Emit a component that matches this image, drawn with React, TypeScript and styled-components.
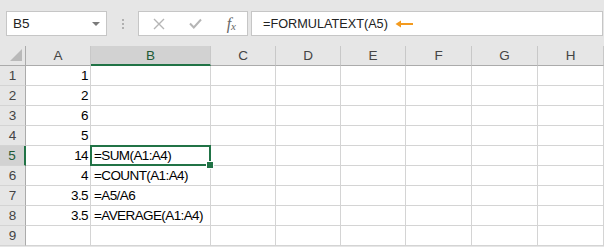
import React from "react";
import styled, { createGlobalStyle, css } from "styled-components";

const GlobalStyle = createGlobalStyle`
  html, body {
    margin: 0;
    padding: 0;
    background: #e6e6e6;
  }
`;

const columns = ["A", "B", "C", "D", "E", "F", "G", "H"];
const widths = [65, 120, 65, 65, 65, 66, 66, 66];

const rows: [string, string][] = [
  ["1", ""],
  ["2", ""],
  ["6", ""],
  ["5", ""],
  ["14", "=SUM(A1:A4)"],
  ["4", "=COUNT(A1:A4)"],
  ["3.5", "=A5/A6"],
  ["3.5", "=AVERAGE(A1:A4)"],
  ["", ""],
];

const SELECTED_ROW = 5;
const SELECTED_COL = "B";

const App = () => {
  return (
    <>
      <GlobalStyle />
      <Page>
        <FormulaRow>
          <NameBox>
            <span>B5</span>
            <Caret />
          </NameBox>
          <Grip>
            <i />
            <i />
            <i />
          </Grip>
          <FxButtons>
            <svg width="12" height="12" viewBox="0 0 12 12">
              <path d="M1 1 L11 11 M11 1 L1 11" stroke="#b5b5b5" strokeWidth="1.4" fill="none" />
            </svg>
            <svg width="13" height="11" viewBox="0 0 13 11">
              <path d="M1 5.5 L4.8 9.5 L12 1.5" stroke="#b5b5b5" strokeWidth="2" fill="none" />
            </svg>
            <Fx>
              f<sub>x</sub>
            </Fx>
          </FxButtons>
          <FormulaInput>
            <span>=FORMULATEXT(A5)</span>
            <svg width="19" height="8" viewBox="0 0 19 8">
              <path d="M2 4 H18" stroke="#f39a1e" strokeWidth="2" />
              <path d="M0.5 4 L6 0.5 L6 7.5 Z" fill="#f39a1e" />
            </svg>
          </FormulaInput>
        </FormulaRow>

        <Sheet $widths={widths}>
          <Corner>
            <svg width="12" height="12" viewBox="0 0 12 12">
              <path d="M12 0 L12 12 L0 12 Z" fill="#b9b9b9" />
            </svg>
          </Corner>
          {columns.map((c) => (
            <ColHead key={c} $active={c === SELECTED_COL}>
              {c}
            </ColHead>
          ))}
          {rows.map(([a, b], i) => {
            const n = i + 1;
            return (
              <React.Fragment key={n}>
                <RowHead $active={n === SELECTED_ROW}>{n}</RowHead>
                <Cell $align="right">{a}</Cell>
                <Cell $selected={n === SELECTED_ROW}>{b}</Cell>
                {columns.slice(2).map((c) => (
                  <Cell key={c} />
                ))}
              </React.Fragment>
            );
          })}
        </Sheet>
      </Page>
    </>
  );
};

const Page = styled.div`
  width: 604px;
  height: 247px;
  overflow: hidden;
  background: #e6e6e6;
  display: flex;
  flex-direction: column;
  font-family: "Liberation Sans", Arial, sans-serif;
`;

const FormulaRow = styled.div`
  display: flex;
  align-items: stretch;
  height: 25px;
  margin: 11px 1px 10px 6px;
`;

const Box = css`
  box-sizing: border-box;
  background: #ffffff;
  border: 1px solid #c6c6c6;
  display: flex;
  align-items: center;
`;

const NameBox = styled.div`
  ${Box};
  width: 101px;
  padding: 0 6px 0 6px;
  justify-content: space-between;
  font-size: 13.5px;
  color: #222;
`;

const Caret = styled.span`
  width: 0;
  height: 0;
  border-left: 4px solid transparent;
  border-right: 4px solid transparent;
  border-top: 4px solid #7a7a7a;
  margin-top: 1px;
`;

const Grip = styled.div`
  width: 31px;
  display: flex;
  flex-direction: column;
  align-items: center;
  justify-content: center;
  gap: 2px;

  i {
    width: 2px;
    height: 2px;
    background: #b0b0b0;
  }
`;

const FxButtons = styled.div`
  ${Box};
  width: 110px;
  padding: 0 11px 0 14px;
  justify-content: space-between;
`;

const Fx = styled.span`
  font-family: "Liberation Serif", "Times New Roman", serif;
  font-style: italic;
  font-size: 16px;
  color: #666;
  line-height: 1;

  sub {
    font-size: 11px;
    vertical-align: -1px;
  }
`;

const FormulaInput = styled.div`
  ${Box};
  flex: 1;
  margin-left: 3px;
  padding-left: 11px;
  gap: 7px;
  font-size: 12.7px;
  color: #222;
`;

const Sheet = styled.div<{ $widths: number[] }>`
  display: grid;
  grid-template-columns: 26px ${(p) => p.$widths.map((w) => `${w}px`).join(" ")};
  grid-auto-rows: 20px;
  background: #ffffff;
  font-size: 13.5px;
`;

const HeadBase = css`
  box-sizing: border-box;
  background: #e6e6e6;
  color: #444;
  display: flex;
  align-items: center;
  justify-content: center;
`;

const Corner = styled.div`
  ${HeadBase};
  align-items: flex-end;
  justify-content: flex-end;
  padding: 0 3px 4px 0;
  border-right: 1px solid #ababab;
  border-bottom: 1px solid #ababab;
`;

const ColHead = styled.div<{ $active?: boolean }>`
  ${HeadBase};
  border-right: 1px solid #c8c8c8;
  border-bottom: 1px solid #ababab;
  ${(p) =>
    p.$active &&
    css`
      background: #d2d2d2;
      color: #215a36;
      border-bottom: 2px solid #217346;
    `}
`;

const RowHead = styled.div<{ $active?: boolean }>`
  ${HeadBase};
  border-right: 1px solid #ababab;
  border-bottom: 1px solid #d4d4d4;
  ${(p) =>
    p.$active &&
    css`
      background: #d2d2d2;
      color: #215a36;
      border-right: 2px solid #217346;
    `}
`;

const Cell = styled.div<{ $align?: "right"; $selected?: boolean }>`
  position: relative;
  box-sizing: border-box;
  border-right: 1px solid #d4d4d4;
  border-bottom: 1px solid #d4d4d4;
  display: flex;
  align-items: flex-end;
  justify-content: ${(p) => (p.$align === "right" ? "flex-end" : "flex-start")};
  padding: 0 2px 1px 3px;
  line-height: 16px;
  letter-spacing: -0.6px;
  color: #000;
  white-space: nowrap;

  ${(p) =>
    p.$selected &&
    css`
      &::after {
        content: "";
        position: absolute;
        left: -1px;
        top: -1px;
        right: -1px;
        bottom: -1px;
        border: 2px solid #217346;
      }
      &::before {
        content: "";
        position: absolute;
        right: -4px;
        bottom: -4px;
        width: 6px;
        height: 6px;
        background: #217346;
        border: 1px solid #ffffff;
        z-index: 1;
      }
    `}
`;

export default App;
